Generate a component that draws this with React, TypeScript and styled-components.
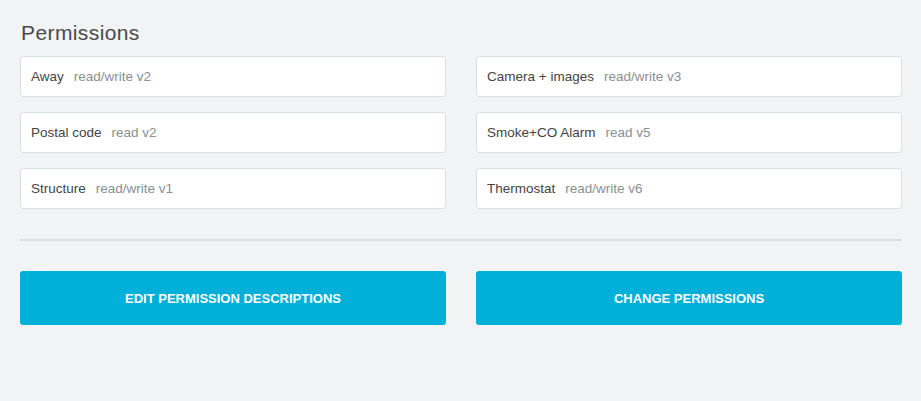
import React from 'react';
import styled, { createGlobalStyle } from 'styled-components';

const GlobalStyle = createGlobalStyle`
  html, body {
    margin: 0;
    padding: 0;
    background: #f2f3f5;
  }
  body {
    font-family: "Liberation Sans", Arial, sans-serif;
    color: #444;
  }
`;

const Page = styled.div`
  padding: 21px 20px 0 20px;
  width: 881px;
`;

const Title = styled.h2`
  margin: 0 0 11px 1px;
  font-size: 21px;
  font-weight: 400;
  line-height: 24px;
  letter-spacing: 0.4px;
  color: #4a4a4a;
`;

const Grid = styled.div`
  display: grid;
  grid-template-columns: 426px 426px;
  column-gap: 30px;
  row-gap: 15px;
`;

const Card = styled.div`
  height: 39px;
  display: flex;
  align-items: center;
  padding: 0 10px;
  background: #fff;
  border: 1px solid #d9e0e3;
  border-radius: 3px;
  font-size: 13.5px;
`;

const Name = styled.span`
  color: #444;
  margin-right: 10px;
`;

const Access = styled.span`
  color: #8a8f94;
`;

const Divider = styled.hr`
  margin: 30px 0;
  border: 0;
  border-top: 2px solid #dcdddf;
`;

const Actions = styled.div`
  display: grid;
  grid-template-columns: 426px 426px;
  column-gap: 30px;
`;

const Button = styled.button`
  height: 54px;
  border: 0;
  border-radius: 3px;
  background: #00b0d8;
  color: #fff;
  font-family: "Liberation Sans", Arial, sans-serif;
  font-size: 13px;
  font-weight: 700;
  text-transform: uppercase;
  cursor: pointer;
`;

const permissions = [
  { name: 'Away', access: 'read/write v2' },
  { name: 'Camera + images', access: 'read/write v3' },
  { name: 'Postal code', access: 'read v2' },
  { name: 'Smoke+CO Alarm', access: 'read v5' },
  { name: 'Structure', access: 'read/write v1' },
  { name: 'Thermostat', access: 'read/write v6' },
];

const App = () => (
  <>
    <GlobalStyle />
    <Page>
      <Title>Permissions</Title>
      <Grid>
        {permissions.map((p) => (
          <Card key={p.name}>
            <Name>{p.name}</Name>
            <Access>{p.access}</Access>
          </Card>
        ))}
      </Grid>
      <Divider />
      <Actions>
        <Button>Edit permission descriptions</Button>
        <Button>Change permissions</Button>
      </Actions>
    </Page>
  </>
);

export default App;
